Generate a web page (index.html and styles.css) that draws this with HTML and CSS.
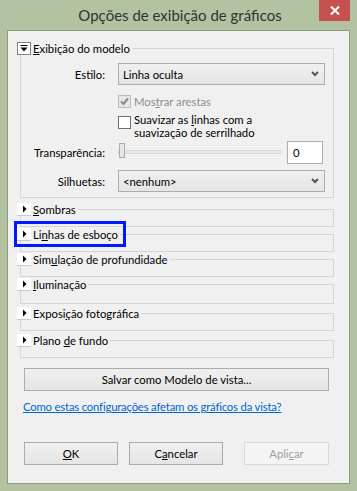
FILE: index.html
```html
<!DOCTYPE html>
<html lang="pt">
<head>
    <meta charset="UTF-8">
    <meta name="viewport" content="width=device-width, initial-scale=1.0">
    <title>Opções de exibição de gráficos</title>
    <link rel="stylesheet" href="styles.css">
</head>
<body>
    <div class="window">
        <!-- Title bar -->
        <div class="titlebar">
            <span class="title">Opções de exibição de gráficos</span>
            <button class="close" type="button">
                <svg width="10" height="9" viewBox="0 0 10 9"><path d="M1 0.5l8 8M9 0.5l-8 8" stroke="#fff" stroke-width="2"/></svg>
            </button>
        </div>

        <div class="client">
            <!-- Exibição do modelo -->
            <fieldset class="group group-open">
                <legend class="group-head">
                    <svg class="toggle" width="14" height="13" viewBox="0 0 14 13">
                        <rect width="14" height="13" fill="#fff"/>
                        <rect x="0.5" y="0.5" width="13" height="12" fill="none" stroke="#000" stroke-dasharray="1 1"/>
                        <path d="M3.5 3.5h7" stroke="#000"/>
                        <path d="M3.5 5.5h7l-3.5 4z" fill="#000"/>
                    </svg>
                    <span><u>E</u>xibição do modelo</span>
                </legend>
                <div class="fields">
                    <label class="field-label">Estilo:</label>
                    <div class="select">
                        <span>Linha oculta</span>
                        <svg width="8" height="6" viewBox="0 0 8 6"><path d="M1 1l3 3 3-3" fill="none" stroke="#555" stroke-width="2"/></svg>
                    </div>

                    <div class="check check-disabled row-mostrar">
                        <span class="box">
                            <svg width="11" height="11" viewBox="0 0 11 11"><path d="M2 5.5l2.5 2.5 4.5-5.5" fill="none" stroke="#8a8a8a" stroke-width="2"/></svg>
                        </span>
                        <span>Mos<u>t</u>rar arestas</span>
                    </div>

                    <div class="check row-suavizar">
                        <span class="box"></span>
                        <span>Suavizar as <u>l</u>inhas com a<br>suavização de serrilhado</span>
                    </div>

                    <label class="field-label row-transp">Transparência:</label>
                    <div class="slider-row row-transp">
                        <div class="slider">
                            <div class="track"></div>
                            <div class="thumb"></div>
                        </div>
                        <div class="textbox">0</div>
                    </div>

                    <label class="field-label row-silh">Silhuetas:</label>
                    <div class="select row-silh">
                        <span>&lt;nenhum&gt;</span>
                        <svg width="8" height="6" viewBox="0 0 8 6"><path d="M1 1l3 3 3-3" fill="none" stroke="#555" stroke-width="2"/></svg>
                    </div>
                </div>
            </fieldset>

            <!-- Collapsed groups -->
            <fieldset class="group group-closed first-closed">
                <legend class="group-head">
                    <svg class="toggle" width="14" height="13" viewBox="0 0 14 13"><rect width="14" height="13" fill="#fff"/><path d="M0 12.5h14" stroke="#c8c8c8"/><path d="M6 2.5v7l3.5-3.5z" fill="#000"/></svg>
                    <span><u>S</u>ombras</span>
                </legend>
                <div class="group-body"></div>
            </fieldset>

            <fieldset class="group group-closed">
                <legend class="group-head highlighted">
                    <svg class="toggle" width="14" height="13" viewBox="0 0 14 13"><rect width="14" height="13" fill="#fff"/><path d="M0 12.5h14" stroke="#c8c8c8"/><path d="M6 2.5v7l3.5-3.5z" fill="#000"/></svg>
                    <span>Li<u>n</u>has de esboço</span>
                </legend>
                <div class="group-body"></div>
            </fieldset>

            <fieldset class="group group-closed">
                <legend class="group-head">
                    <svg class="toggle" width="14" height="13" viewBox="0 0 14 13"><rect width="14" height="13" fill="#fff"/><path d="M0 12.5h14" stroke="#c8c8c8"/><path d="M6 2.5v7l3.5-3.5z" fill="#000"/></svg>
                    <span>Sim<u>u</u>lação de profundidade</span>
                </legend>
                <div class="group-body"></div>
            </fieldset>

            <fieldset class="group group-closed">
                <legend class="group-head">
                    <svg class="toggle" width="14" height="13" viewBox="0 0 14 13"><rect width="14" height="13" fill="#fff"/><path d="M0 12.5h14" stroke="#c8c8c8"/><path d="M6 2.5v7l3.5-3.5z" fill="#000"/></svg>
                    <span><u>I</u>luminação</span>
                </legend>
                <div class="group-body group-body-tall"></div>
            </fieldset>

            <fieldset class="group group-closed gap-lg">
                <legend class="group-head">
                    <svg class="toggle" width="14" height="13" viewBox="0 0 14 13"><rect width="14" height="13" fill="#fff"/><path d="M0 12.5h14" stroke="#c8c8c8"/><path d="M6 2.5v7l3.5-3.5z" fill="#000"/></svg>
                    <span>Exposi<u>ç</u>ão fotográfica</span>
                </legend>
                <div class="group-body"></div>
            </fieldset>

            <fieldset class="group group-closed gap-lg">
                <legend class="group-head">
                    <svg class="toggle" width="14" height="13" viewBox="0 0 14 13"><rect width="14" height="13" fill="#fff"/><path d="M0 12.5h14" stroke="#c8c8c8"/><path d="M6 2.5v7l3.5-3.5z" fill="#000"/></svg>
                    <span>Plano <u>d</u>e fundo</span>
                </legend>
                <div class="group-body"></div>
            </fieldset>

            <button class="btn btn-wide" type="button">Salvar como Modelo de vista...</button>

            <a class="help-link" href="#">Como estas configurações afetam os gráficos da vista?</a>

            <!-- Dialog buttons -->
            <div class="actions">
                <button class="btn btn-ok" type="button"><u>O</u>K</button>
                <button class="btn btn-cancel" type="button">C<u>a</u>ncelar</button>
                <button class="btn btn-apply" type="button" disabled>Apli<u>c</u>ar</button>
            </div>
        </div>
    </div>
</body>
</html>
```

FILE: styles.css
```css
/* General */
body {
    margin: 0;
    font-family: Lato, "Liberation Sans", sans-serif;
    font-size: 11.3px;
    color: #000;
    background: #b3c2a1;
}

.window {
    width: 357px;
    height: 491px;
    background: #b3c2a1;
    display: flex;
    flex-direction: column;
}

/* Title bar */
.titlebar {
    position: relative;
    height: 30px;
    display: flex;
    align-items: center;
    justify-content: center;
}

.title {
    font-size: 15px;
    color: #333;
    margin-left: 3px;
}

.close {
    position: absolute;
    top: 0;
    right: 7px;
    width: 31px;
    height: 21px;
    padding: 0;
    border: none;
    background: #c75050;
    display: flex;
    align-items: center;
    justify-content: center;
}

/* Client area */
.client {
    margin: 0 7px;
    height: 454px;
    box-sizing: border-box;
    border: 1px solid #8d9b7d;
    background: #f0f0f0;
    display: flex;
    flex-direction: column;
}

/* Group boxes */
.group {
    margin: 0 15px 0 12px;
    padding: 0;
    border: 1px solid #d5d5d5;
    min-width: 0;
}

.group-open {
    margin-top: 11px;
}

.group-closed {
    margin-top: 1px;
}

.group-closed.first-closed {
    margin-top: 5px;
}

.group-closed.gap-lg {
    margin-top: 3px;
}

.group-head {
    position: relative;
    display: flex;
    align-items: center;
    gap: 2px;
    height: 13px;
    line-height: 13px;
    margin-left: -4px;
    padding: 0 2px 0 0;
}

.toggle {
    display: block;
    flex: none;
}

.group-body {
    height: 10px;
}

.group-body-tall {
    height: 12px;
}

/* Annotation box */
.highlighted::after {
    content: "";
    position: absolute;
    left: -3px;
    top: -7px;
    width: 112px;
    height: 26px;
    box-sizing: border-box;
    border: 3px solid #0018ff;
}

/* Fields grid */
.fields {
    display: grid;
    grid-template-columns: 84px 207px;
    column-gap: 13px;
    align-items: center;
    padding: 8px 8px 5px 0;
}

.field-label {
    text-align: right;
}

.select {
    height: 22px;
    box-sizing: border-box;
    border: 1px solid #acacac;
    background: linear-gradient(#f0f0f0, #e5e5e5);
    display: flex;
    align-items: center;
    justify-content: space-between;
    padding: 0 5px 0 4px;
}

.check {
    grid-column: 2;
    display: flex;
    align-items: flex-start;
    gap: 3px;
    line-height: 13px;
}

.box {
    width: 13px;
    height: 13px;
    box-sizing: border-box;
    border: 1px solid #707070;
    background: #fff;
    flex: none;
    display: flex;
    align-items: center;
    justify-content: center;
}

.check-disabled {
    color: #8d8d8d;
}

.check-disabled .box {
    border-color: #bcbcbc;
    background: #e6e6e6;
}

.row-mostrar {
    margin-top: 10px;
}

.row-suavizar {
    margin-top: 5px;
}

.row-suavizar .box {
    margin-top: 3px;
}

.row-transp {
    margin-top: 2px;
}

.row-silh {
    margin-top: 6px;
}

/* Slider */
.slider-row {
    display: flex;
    align-items: center;
    gap: 6px;
    padding-right: 2px;
}

.slider {
    position: relative;
    flex: 1;
    height: 23px;
}

.track {
    margin-top: 9px;
    height: 4px;
    box-sizing: border-box;
    border: 1px solid #dadada;
    background: #e7e7e7;
}

.thumb {
    position: absolute;
    left: 1px;
    top: 2px;
    width: 6px;
    height: 15px;
    box-sizing: border-box;
    border: 1px solid #acacac;
    background: #e6e6e6;
}

.textbox {
    width: 36px;
    height: 23px;
    box-sizing: border-box;
    border: 1px solid #abadb3;
    background: #fff;
    padding-left: 5px;
    line-height: 21px;
}

/* Buttons */
.btn {
    font-family: inherit;
    font-size: 11.3px;
    color: #000;
    height: 23px;
    padding: 0;
    border: 1px solid #acacac;
    background: linear-gradient(#f0f0f0, #e5e5e5);
}

.btn-wide {
    margin: 10px 0 0 16px;
    width: 305px;
}

.help-link {
    margin: 9px 0 0 15px;
    line-height: 14px;
    letter-spacing: -0.18px;
    color: #0066cc;
    text-decoration: underline;
    align-self: flex-start;
}

.actions {
    display: flex;
    margin: 28px 0 0 16px;
}

.btn-ok,
.btn-cancel {
    width: 94px;
}

.btn-cancel {
    margin-left: 11px;
}

.btn-apply {
    width: 85px;
    margin-left: 21px;
    border-color: #d9d9d9;
    background: #f4f4f4;
    color: #a0a0a0;
}
```
